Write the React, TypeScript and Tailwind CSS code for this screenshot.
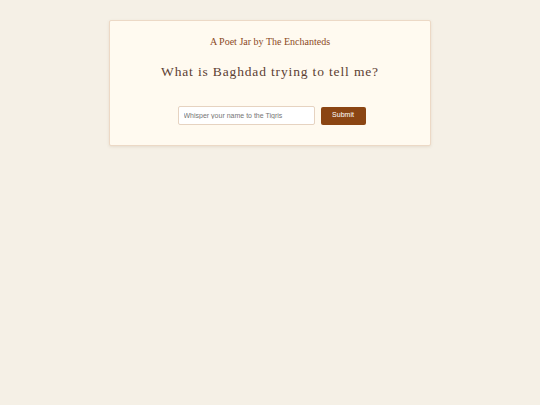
import React from "react";

export default function App() {
  return (
    <div className="min-h-[405px] w-full bg-[#f5f0e6] pt-5">
      <div className="mx-auto flex w-[322px] flex-col items-center rounded-[2px] border border-[#ecd9c6] bg-[#fffaf0] pt-[15px] pb-[20px] shadow-[0_1px_3px_rgba(120,80,40,0.12)]">
        <div className="font-['Liberation_Serif',serif] text-[10px] leading-[12px] text-[#8b4a26]">
          A Poet Jar by The Enchanteds
        </div>
        <div className="mt-[16px] font-['Liberation_Serif',serif] text-[13.5px] leading-[16px] tracking-[0.85px] text-[#5c4033]">
          What is Baghdad trying to tell me?
        </div>
        <div className="mt-[26px] ml-[3px] flex items-center gap-[6px]">
          <input
            className="h-[19px] w-[137px] rounded-[2px] border border-[#e6d3c1] bg-white px-[5px] font-['Liberation_Sans',sans-serif] text-[7px] text-[#333] outline-none placeholder:text-[#757575]"
            placeholder="Whisper your name to the Tigris"
          />
          <button className="h-[18px] w-[45px] rounded-[2px] bg-[#8b4513] font-['Liberation_Sans',sans-serif] text-[7px] text-white">
            Submit
          </button>
        </div>
      </div>
    </div>
  );
}
